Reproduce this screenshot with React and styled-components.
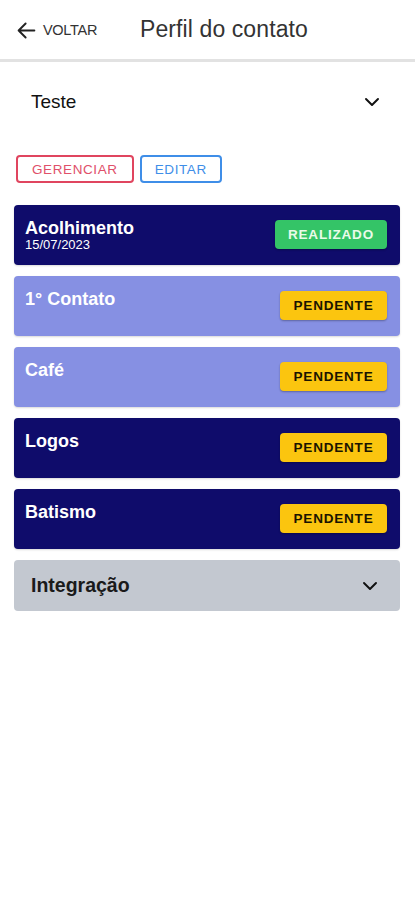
import React from "react";
import styled, { createGlobalStyle } from "styled-components";

const Global = createGlobalStyle`
  html, body { margin: 0; padding: 0; background: #ffffff; }
  body { font-family: "Liberation Sans", Arial, sans-serif; }
  * { box-sizing: border-box; }
`;

const Page = styled.div`
  width: 415px;
  min-height: 900px;
  background: #fff;
`;

const Header = styled.header`
  height: 62px;
  display: flex;
  align-items: center;
  padding: 0 0 0 16px;
  border-bottom: 3px solid #e2e2e2;
`;

const Back = styled.div`
  display: flex;
  align-items: center;
  gap: 6px;
  color: #333;
  font-size: 14.5px;
  letter-spacing: -0.3px;
  width: 124px;
  padding-top: 1px;
`;

const Title = styled.h1`
  margin: 0;
  font-size: 23px;
  font-weight: 400;
  color: #333;
  letter-spacing: 0.1px;
`;

const Select = styled.div`
  display: flex;
  align-items: center;
  justify-content: space-between;
  padding: 0 34px 0 31px;
  height: 80px;
  font-size: 19px;
  color: #111;
`;

const Actions = styled.div`
  display: flex;
  gap: 6px;
  padding: 13px 16px 0;
`;

const OutlineButton = styled.button`
  height: 28px;
  padding: 0 ${(p) => p.$pad}px;
  border: 2px solid ${(p) => p.$color};
  border-radius: 4px;
  background: #fff;
  color: ${(p) => p.$text};
  font-family: inherit;
  font-size: 13.5px;
  letter-spacing: 0.6px;
  font-weight: 400;
`;

const List = styled.div`
  display: flex;
  flex-direction: column;
  gap: 11.5px;
  padding: 22px 15px 0 14px;
`;

const Card = styled.div`
  height: 59.5px;
  border-radius: 4px;
  background: ${(p) => (p.$light ? "#8690e3" : "#0f0c6b")};
  display: flex;
  justify-content: space-between;
  align-items: flex-start;
  padding: 13px 13px 0 11px;
  box-shadow: 0 1px 2px rgba(0, 0, 0, 0.15);
`;

const CardText = styled.div`
  display: flex;
  flex-direction: column;
  color: #fff;
`;

const CardTitle = styled.div`
  font-size: 18px;
  font-weight: 700;
  line-height: 20px;
`;

const CardDate = styled.div`
  font-size: 13px;
  line-height: 14px;
`;

const Badge = styled.div`
  margin-top: 2px;
  height: 29px;
  width: ${(p) => p.$w}px;
  border-radius: 4px;
  display: flex;
  align-items: center;
  justify-content: center;
  font-size: 13.5px;
  font-weight: 700;
  letter-spacing: 0.8px;
  background: ${(p) => (p.$done ? "#34c467" : "#fbc50f")};
  color: ${(p) => (p.$done ? "#e9fbe9" : "#1a1400")};
  box-shadow: 0 1px 2px rgba(0, 0, 0, 0.3);
`;

const Accordion = styled.div`
  height: 51px;
  border-radius: 4px;
  background: #c3c8d0;
  display: flex;
  align-items: center;
  justify-content: space-between;
  padding: 0 21px 0 17px;
  font-size: 19.5px;
  font-weight: 700;
  color: #1a1a1a;
`;

const Chevron = ({ size = 18 }) => (
  <svg width={size} height={size} viewBox="0 0 24 24" fill="none" stroke="#111" strokeWidth="2.6" strokeLinecap="round" strokeLinejoin="round">
    <path d="M4 8l8 8 8-8" />
  </svg>
);

const ArrowLeft = () => (
  <svg width="21" height="21" viewBox="0 0 24 24" fill="none" stroke="#222" strokeWidth="2.2" strokeLinecap="round" strokeLinejoin="round">
    <path d="M21 12H3M11 4l-8 8 8 8" />
  </svg>
);

const steps = [
  { title: "1° Contato", light: true },
  { title: "Café", light: true },
  { title: "Logos" },
  { title: "Batismo" },
];

export default function App() {
  return (
    <Page>
      <Global />
      <Header>
        <Back>
          <ArrowLeft />
          <span>VOLTAR</span>
        </Back>
        <Title>Perfil do contato</Title>
      </Header>
      <Select>
        <span>Teste</span>
        <Chevron />
      </Select>
      <Actions>
        <OutlineButton $color="#e0455f" $text="#e0506a" $pad={14}>GERENCIAR</OutlineButton>
        <OutlineButton $color="#3f8ee8" $text="#3f8ee8" $pad={13}>EDITAR</OutlineButton>
      </Actions>
      <List>
        <Card>
          <CardText>
            <CardTitle>Acolhimento</CardTitle>
            <CardDate>15/07/2023</CardDate>
          </CardText>
          <Badge $done $w={112}>REALIZADO</Badge>
        </Card>
        {steps.map((s) => (
          <Card key={s.title} $light={s.light}>
            <CardText>
              <CardTitle>{s.title}</CardTitle>
            </CardText>
            <Badge $w={107}>PENDENTE</Badge>
          </Card>
        ))}
        <Accordion>
          <span>Integração</span>
          <Chevron />
        </Accordion>
      </List>
    </Page>
  );
}
